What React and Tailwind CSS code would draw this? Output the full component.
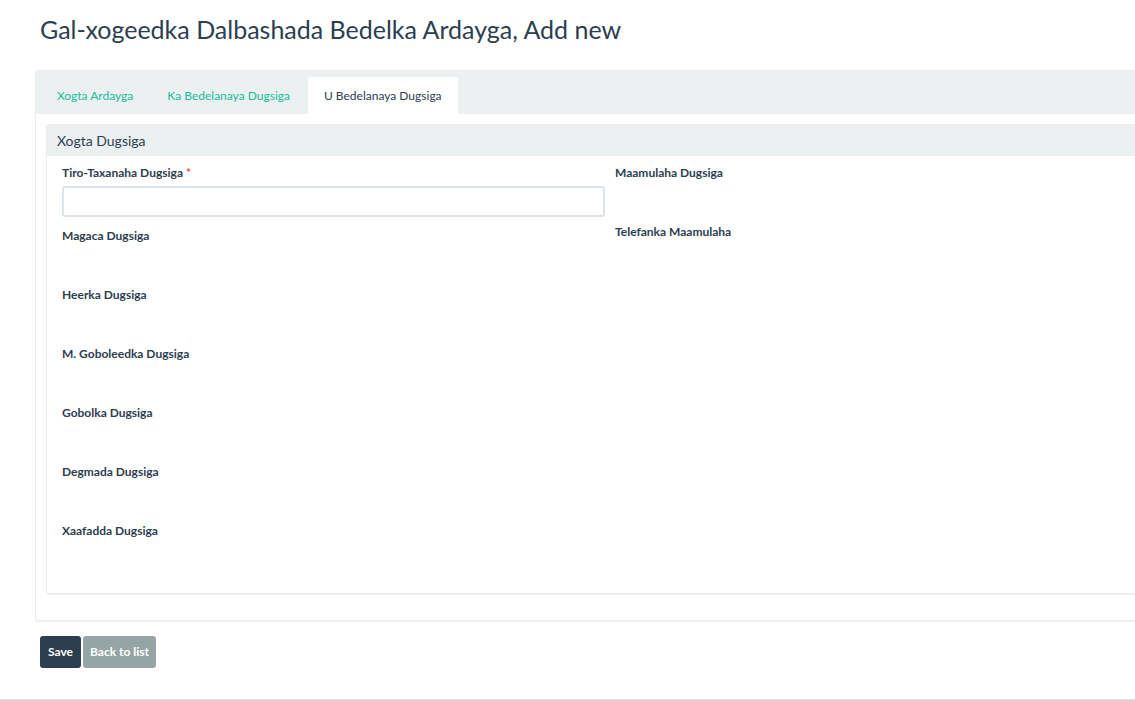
import { useState } from 'react'

const LEFT_FIELDS = [
  'Magaca Dugsiga',
  'Heerka Dugsiga',
  'M. Goboleedka Dugsiga',
  'Gobolka Dugsiga',
  'Degmada Dugsiga',
  'Xaafadda Dugsiga',
]

const RIGHT_FIELDS = ['Maamulaha Dugsiga', 'Telefanka Maamulaha']

const TABS = ['Xogta Ardayga', 'Ka Bedelanaya Dugsiga', 'U Bedelanaya Dugsiga']

export default function App() {
  const [active, setActive] = useState(2)
  const [code, setCode] = useState('')

  return (
    <div
      className="relative w-[1135px] h-[701px] overflow-hidden bg-white text-[#2c3e50]"
      style={{ fontFamily: 'Lato, "Open Sans", sans-serif' }}
    >
      {/* Title */}
      <h1 className="pl-[40px] pt-[15px] text-[25px] leading-[28px] font-normal text-[#2c3e50]">
        Gal-xogeedka Dalbashada Bedelka Ardayga, Add new
      </h1>

      {/* Outer tab panel */}
      <div className="ml-[35px] mt-[27px] w-[1130px] h-[551px] border border-[#ececec] rounded-[3px] shadow-[0_1px_1px_rgba(0,0,0,0.06)] flex flex-col">
        <div className="h-[43px] bg-[#ecf0f1] flex items-end pl-[5px] gap-[2px]">
          {TABS.map((t, i) => (
            <button
              key={t}
              onClick={() => setActive(i)}
              className={
                i === active
                  ? 'h-[37px] px-[16px] text-[12px] bg-white text-[#2c3e50] rounded-t-[3px]'
                  : 'h-[37px] px-[16px] text-[12px] text-[#18bc9c]'
              }
            >
              {t}
            </button>
          ))}
        </div>

        {/* Inner panel */}
        <div className="mt-[10px] ml-[10px] w-[1120px] h-[470px] border border-[#ececec] rounded-[3px] shadow-[0_1px_2px_rgba(0,0,0,0.06)]">
          <div className="h-[31px] bg-[#ecf0f1] pl-[10px] flex items-center text-[14px] text-[#2c3e50]">
            Xogta Dugsiga
          </div>
          <div className="flex pl-[15px] pt-[8px]">
            {/* Left column */}
            <div className="w-[543px]">
              <div className="h-[63px]">
                <label className="block text-[12px] font-bold leading-[17px] mb-[5px]">
                  Tiro-Taxanaha Dugsiga <span className="text-[#e74c3c]">*</span>
                </label>
                <input
                  value={code}
                  onChange={(e) => setCode(e.target.value)}
                  className="w-[543px] h-[31px] border-2 border-[#dce4ec] rounded-[3px] px-2 text-[13px] focus:outline-none"
                />
              </div>
              {LEFT_FIELDS.map((f) => (
                <div key={f} className="h-[59px]">
                  <label className="block text-[12px] font-bold leading-[17px]">{f}</label>
                </div>
              ))}
            </div>

            {/* Right column */}
            <div className="ml-[10px]">
              {RIGHT_FIELDS.map((f) => (
                <div key={f} className="h-[59px]">
                  <label className="block text-[12px] font-bold leading-[17px]">{f}</label>
                </div>
              ))}
            </div>
          </div>
        </div>
      </div>

      {/* Buttons */}
      <div className="ml-[40px] mt-[15px] flex gap-[2px]">
        <button className="h-[32px] px-[8px] bg-[#2c3e50] text-white text-[12px] font-bold rounded-[3px]">
          Save
        </button>
        <button className="h-[32px] px-[7px] bg-[#95a5a6] text-white text-[12px] font-bold rounded-[3px]">
          Back to list
        </button>
      </div>

      <div className="absolute left-0 right-0 top-[699px] h-[2px] bg-[#dcdcdc]" />
    </div>
  )
}
